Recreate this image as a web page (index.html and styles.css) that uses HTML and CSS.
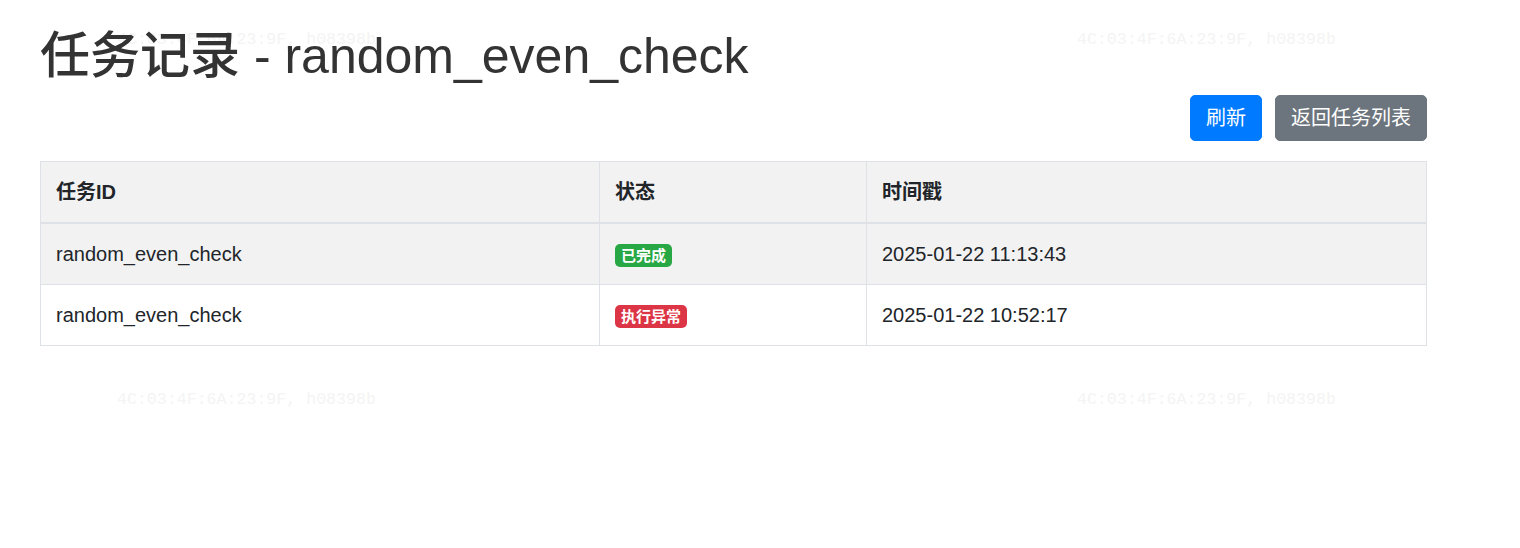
FILE: index.html
```html
<!DOCTYPE html>
<html lang="zh-CN">
<head>
    <meta charset="UTF-8">
    <meta name="viewport" content="width=device-width, initial-scale=1.0">
    <title>任务记录 - random_even_check</title>
    <link rel="stylesheet" href="styles.css">
</head>
<body>
    <div class="watermark" aria-hidden="true">
        <span class="wm wm-1">4C:03:4F:6A:23:9F, h08398b</span>
        <span class="wm wm-2">4C:03:4F:6A:23:9F, h08398b</span>
        <span class="wm wm-3">4C:03:4F:6A:23:9F, h08398b</span>
        <span class="wm wm-4">4C:03:4F:6A:23:9F, h08398b</span>
    </div>
    <div class="container">
        <h1>任务记录 - random_even_check</h1>
        <div class="actions">
            <a class="btn btn-primary" href="#">刷新</a>
            <a class="btn btn-secondary" href="#">返回任务列表</a>
        </div>
        <table class="records">
            <thead>
                <tr>
                    <th class="col-id">任务ID</th>
                    <th class="col-status">状态</th>
                    <th class="col-time">时间戳</th>
                </tr>
            </thead>
            <tbody>
                <tr class="striped">
                    <td>random_even_check</td>
                    <td><span class="badge badge-success">已完成</span></td>
                    <td>2025-01-22 11:13:43</td>
                </tr>
                <tr>
                    <td>random_even_check</td>
                    <td><span class="badge badge-danger">执行异常</span></td>
                    <td>2025-01-22 10:52:17</td>
                </tr>
            </tbody>
        </table>
    </div>
</body>
</html>
```

FILE: styles.css
```css
body {
    margin: 0;
    font-family: 'Liberation Sans', 'Noto Sans CJK SC', Arial, sans-serif;
    font-size: 20px;
    line-height: 1.5;
    color: #212529;
    background-color: white;
}
.watermark {
    position: absolute;
    top: 0;
    left: 0;
    width: 100%;
    height: 100%;
    pointer-events: none;
}
.wm {
    position: absolute;
    font-family: 'Liberation Mono', monospace;
    font-size: 16.6px;
    line-height: 20px;
    color: #f4f4f4;
    white-space: nowrap;
}
.wm-1 { left: 117px; top: 30px; }
.wm-2 { left: 1077px; top: 30px; }
.wm-3 { left: 117px; top: 390px; }
.wm-4 { left: 1077px; top: 390px; }
.container {
    position: relative;
    width: 1387px;
    padding: 26px 0 0 40px;
}
h1 {
    margin: 0 0 9px;
    font-size: 50px;
    font-weight: 500;
    line-height: 1.2;
    color: #333;
}
.actions {
    display: flex;
    justify-content: flex-end;
    gap: 13px;
    margin-bottom: 20px;
}
.btn {
    display: inline-block;
    padding: 7px 15px;
    font-size: 20px;
    line-height: 30px;
    color: white;
    text-decoration: none;
    border: 1px solid transparent;
    border-radius: 5px;
}
.btn-primary {
    background-color: #007bff;
    border-color: #007bff;
}
.btn-secondary {
    background-color: #6c757d;
    border-color: #6c757d;
}
.records {
    width: 100%;
    border-collapse: collapse;
    border: 1px solid #dee2e6;
}
.records th,
.records td {
    padding: 15px;
    text-align: left;
    vertical-align: top;
    border: 1px solid #dee2e6;
}
.records thead th {
    font-weight: bold;
    background-color: #f2f2f2;
    border-bottom: 2px solid #dee2e6;
}
.col-id { width: 528px; }
.col-status { width: 236px; }
.records tr.striped td {
    background-color: #f2f2f2;
}
.badge {
    display: inline-block;
    padding: 4px 6px;
    font-size: 15px;
    font-weight: bold;
    line-height: 1;
    color: white;
    border-radius: 5px;
}
.badge-success { background-color: #28a745; }
.badge-danger { background-color: #dc3545; }
```
